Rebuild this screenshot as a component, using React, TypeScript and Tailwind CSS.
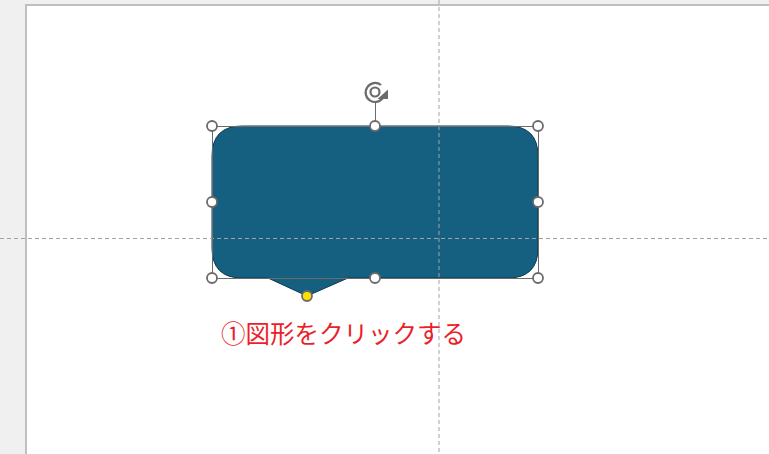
import React from "react";

export default function App() {
  const handles: [number, number][] = [
    [212, 126], [375, 126], [538, 126],
    [212, 202], [538, 202],
    [212, 278], [375, 278], [538, 278],
  ];
  const shapePath =
    "M242 126 H508 Q538 126 538 156 V248 Q538 278 508 278 H348 L307 296 L268 278 H242 Q212 278 212 248 V156 Q212 126 242 126 Z";
  return (
    <div className="relative w-[769px] h-[454px] bg-[#f0f0f0] pl-[25px] pt-[4px] overflow-hidden">
      <div className="w-full h-full bg-white border-l-2 border-t-2 border-[#bfbfbf]" />
      <svg className="absolute left-0 top-0" width="769" height="454" viewBox="0 0 769 454">
        <path d={shapePath} fill="#155f80" stroke="#0c3b50" strokeWidth="1" />
        <line x1="439" y1="0" x2="439" y2="454" stroke="#a3a3a3" strokeWidth="1" strokeDasharray="4 3" />
        <line x1="0" y1="238.5" x2="769" y2="238.5" stroke="#a3a3a3" strokeWidth="1" strokeDasharray="4 3" />
        <rect x="212.5" y="126.5" width="326" height="152" fill="none" stroke="#6b6b6b" strokeWidth="1" />
        <line x1="375.5" y1="126" x2="375.5" y2="101" stroke="#6b6b6b" strokeWidth="1" />
        <g fill="none" stroke="#6b6b6b" strokeWidth="2.2">
          <path d="M383.5 97 A9.5 9.5 0 1 1 381 85" />
          <circle cx="375" cy="92" r="4.5" />
        </g>
        <path d="M377.5 99 L388 99 L388 89.5 Z" fill="#6b6b6b" />
        {handles.map(([x, y], i) => (
          <circle key={i} cx={x} cy={y} r="5" fill="white" stroke="#6b6b6b" strokeWidth="1.8" />
        ))}
        <circle cx="307" cy="296" r="5" fill="#ffe000" stroke="#6b6b6b" strokeWidth="1.8" />
      </svg>
      <div
        className="absolute left-[221px] top-[315px] text-[24.5px] leading-[36px] text-[#ea1f2a] whitespace-nowrap"
        style={{ fontFamily: '"Noto Sans CJK JP", "Noto Sans", sans-serif' }}
      >
        ①図形をクリックする
      </div>
    </div>
  );
}
